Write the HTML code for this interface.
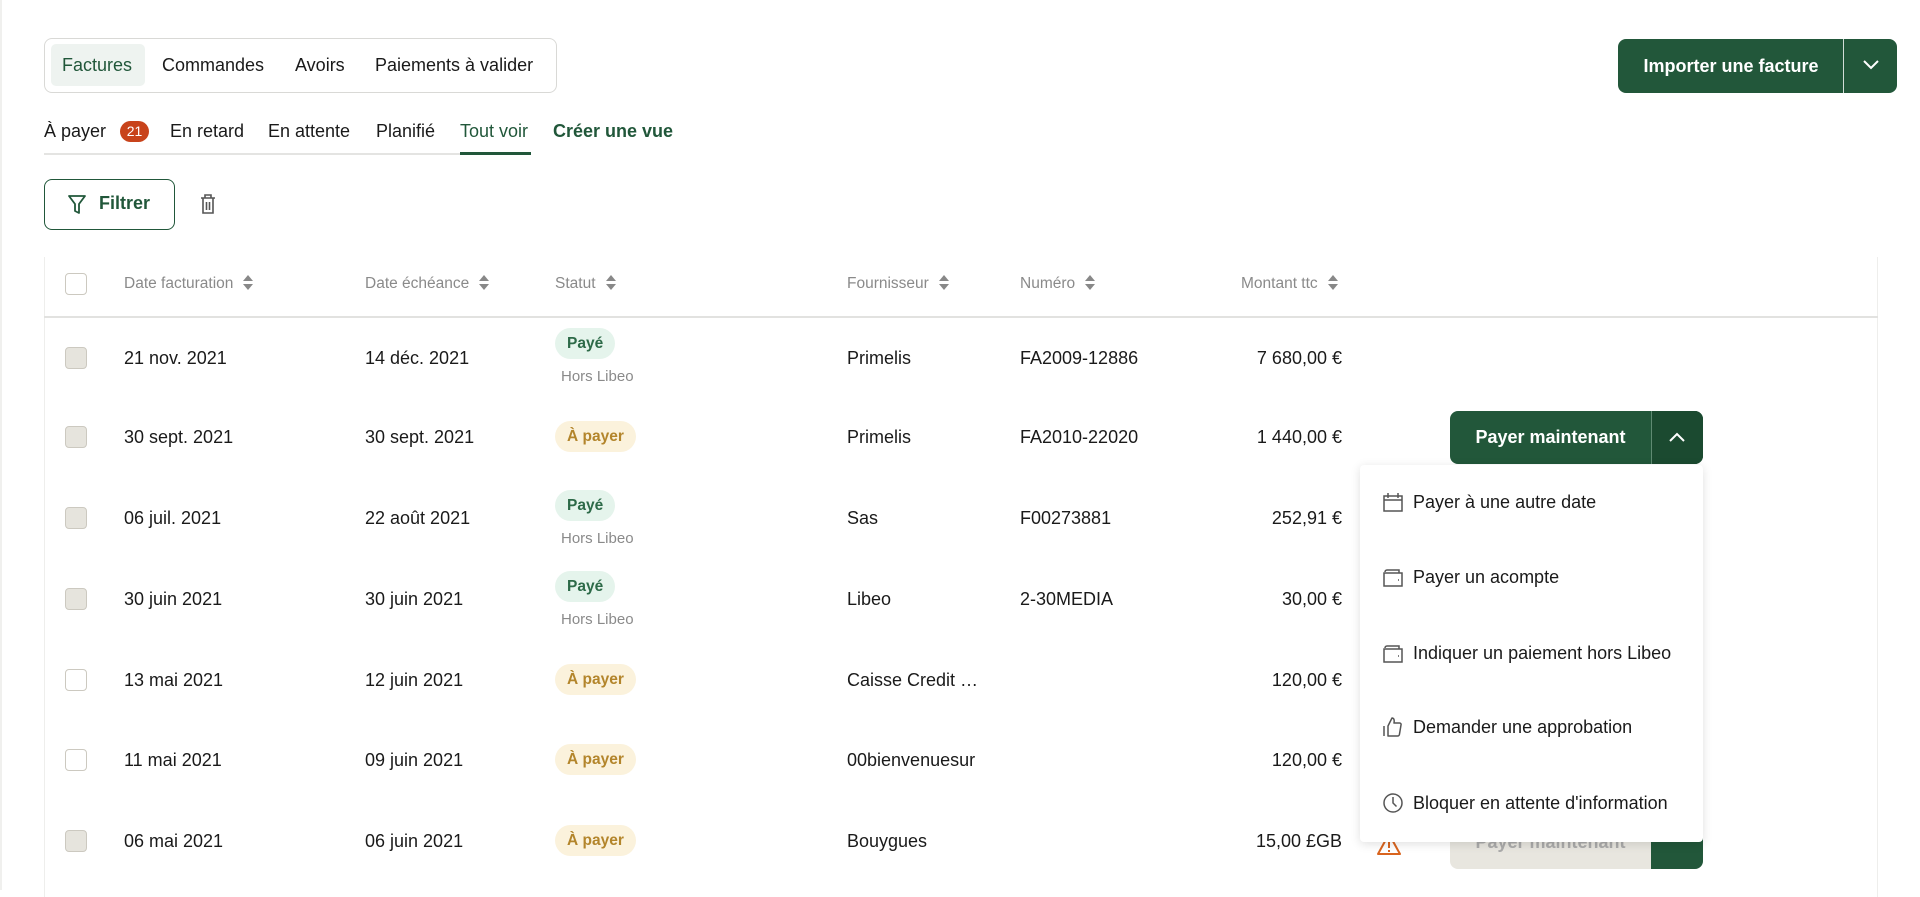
<!DOCTYPE html>
<html><head><meta charset="utf-8"><style>
*{box-sizing:border-box;margin:0;padding:0}
body{width:1920px;height:890px;overflow:hidden;background:#fff;font-family:"Liberation Sans",Arial,sans-serif;color:#1a1a1a;position:relative}
.a{position:absolute;white-space:nowrap}
.tabs{left:44px;top:38px;width:513px;height:55px;border:1px solid #d9d9d6;border-radius:8px}
.tab{top:44px;height:42px;line-height:42px;font-size:18px}
.g{color:#21573a}
.btn{background:#22573a;color:#fff;font-weight:bold;border-radius:8px}
.sub{top:119px;font-size:18px;line-height:24px}
.hd{top:275px;font-size:15.5px;color:#8a8a8a;line-height:18px}
.sort{display:inline-block;margin-left:10px;vertical-align:middle;width:10px;height:15px;position:relative;top:-1px}
.cb{width:22px;height:22px;border:1.5px solid #ccc9c0;border-radius:4px;background:#e6e4dd}
.cb.w{background:#fff}
.c{font-size:18px;line-height:22px}
.pill{font-size:15.5px;font-weight:bold;height:31px;line-height:31px;border-radius:16px;padding:0 12px}
.paye{background:#e5f4ec;color:#2d6a48}
.ap{background:#fbf2dc;color:#b3852b}
.hl{font-size:15px;color:#8a8a8a}
.menu{left:1360px;top:465px;width:343px;height:377px;background:#fff;border-radius:4px;box-shadow:0 2px 10px rgba(0,0,0,.13)}
.mi{left:22px;font-size:18px;line-height:22px}
.mi svg{position:absolute;left:0;top:0}
.mi span{position:absolute;left:31px;top:0}
</style></head><body>
<div class="a" style="left:0;top:0;width:2px;height:890px;background:#f0f0ee"></div>
<div class="a tabs"></div>
<div class="a" style="left:51px;top:44px;width:94px;height:42px;background:#eef3f0;border-radius:5px"></div>
<div class="a tab g" style="left:62px">Factures</div>
<div class="a tab" style="left:162px">Commandes</div>
<div class="a tab" style="left:295px">Avoirs</div>
<div class="a tab" style="left:375px">Paiements à valider</div>

<div class="a btn" style="left:1618px;top:39px;width:279px;height:54px"></div>
<div class="a" style="left:1618px;top:39px;width:226px;height:54px;line-height:54px;text-align:center;color:#fff;font-weight:bold;font-size:18px">Importer une facture</div>
<div class="a" style="left:1843px;top:39px;width:1px;height:54px;background:#fff;opacity:.8"></div>
<svg class="a" style="left:1862px;top:58px" width="18" height="14" viewBox="0 0 18 14"><path d="M2 3l7 7 7-7" fill="none" stroke="#fff" stroke-width="2"/></svg>

<div class="a sub" style="left:44px">À payer</div>
<div class="a" style="left:120px;top:121px;width:29px;height:21px;border-radius:11px;background:#c8431b;color:#fff;font-size:14px;line-height:21px;text-align:center">21</div>
<div class="a sub" style="left:170px">En retard</div>
<div class="a sub" style="left:268px">En attente</div>
<div class="a sub" style="left:376px">Planifié</div>
<div class="a sub g" style="left:460px">Tout voir</div>
<div class="a sub g" style="left:553px;font-weight:bold">Créer une vue</div>
<div class="a" style="left:44px;top:153px;width:487px;height:2px;background:#e4e4e2"></div>
<div class="a" style="left:460px;top:152px;width:71px;height:3px;background:#21573a"></div>

<div class="a" style="left:44px;top:179px;width:131px;height:51px;border:1.5px solid #21573a;border-radius:8px"></div>
<svg class="a" style="left:67px;top:194px" width="20" height="21" viewBox="0 0 20 21"><path d="M2 2h16l-6 8v9l-4-2v-7z" fill="none" stroke="#21573a" stroke-width="1.8" stroke-linejoin="round"/></svg>
<div class="a g" style="left:99px;top:193px;font-size:18px;font-weight:bold">Filtrer</div>
<svg class="a" style="left:199px;top:193px" width="18" height="22" viewBox="0 0 18 22"><path d="M2 5h14M6 5V2h6v3M4 5v15h10V5M7.5 9v8M10.5 9v8" fill="none" stroke="#555" stroke-width="1.6"/></svg>

<div class="a" style="left:44px;top:257px;width:1834px;height:640px;border-left:1px solid #eeeeec;border-right:1px solid #eeeeec"></div>
<div class="a" style="left:44px;top:316px;width:1834px;height:2px;background:#e2e2e0"></div>
<div class="a cb w" style="left:65px;top:273px"></div>
<div class="a hd" style="left:124px">Date facturation<svg class="sort" viewBox="0 0 10 15"><path d="M5 0L10 6H0zM5 15L0 9h10z" fill="#888"/></svg></div>
<div class="a hd" style="left:365px">Date échéance<svg class="sort" viewBox="0 0 10 15"><path d="M5 0L10 6H0zM5 15L0 9h10z" fill="#888"/></svg></div>
<div class="a hd" style="left:555px">Statut<svg class="sort" viewBox="0 0 10 15"><path d="M5 0L10 6H0zM5 15L0 9h10z" fill="#888"/></svg></div>
<div class="a hd" style="left:847px">Fournisseur<svg class="sort" viewBox="0 0 10 15"><path d="M5 0L10 6H0zM5 15L0 9h10z" fill="#888"/></svg></div>
<div class="a hd" style="left:1020px">Numéro<svg class="sort" viewBox="0 0 10 15"><path d="M5 0L10 6H0zM5 15L0 9h10z" fill="#888"/></svg></div>
<div class="a hd" style="left:1241px">Montant ttc<svg class="sort" viewBox="0 0 10 15"><path d="M5 0L10 6H0zM5 15L0 9h10z" fill="#888"/></svg></div>

<div class="a cb" style="left:65px;top:347px"></div>
<div class="a c" style="left:124px;top:347px">21 nov. 2021</div>
<div class="a c" style="left:365px;top:347px">14 déc. 2021</div>
<div class="a pill paye" style="left:555px;top:328px">Payé</div>
<div class="a hl" style="left:561px;top:368px">Hors Libeo</div>
<div class="a c" style="left:847px;top:347px">Primelis</div>
<div class="a c" style="left:1020px;top:347px">FA2009-12886</div>
<div class="a c" style="right:578px;top:347px">7 680,00 €</div>

<div class="a cb" style="left:65px;top:426px"></div>
<div class="a c" style="left:124px;top:426px">30 sept. 2021</div>
<div class="a c" style="left:365px;top:426px">30 sept. 2021</div>
<div class="a pill ap" style="left:555px;top:421px">À payer</div>
<div class="a c" style="left:847px;top:426px">Primelis</div>
<div class="a c" style="left:1020px;top:426px">FA2010-22020</div>
<div class="a c" style="right:578px;top:426px">1 440,00 €</div>
<div class="a btn" style="left:1450px;top:411px;width:253px;height:53px"></div>
<div class="a" style="left:1450px;top:411px;width:201px;height:53px;line-height:53px;text-align:center;color:#fff;font-weight:bold;font-size:18px">Payer maintenant</div>
<div class="a" style="left:1651px;top:411px;width:52px;height:53px;background:#1b4a30;border-radius:0 8px 8px 0;border-left:1px solid #5f8a72"></div>
<svg class="a" style="left:1668px;top:430px" width="18" height="14" viewBox="0 0 18 14"><path d="M2 11l7-7 7 7" fill="none" stroke="#fff" stroke-width="2"/></svg>

<div class="a cb" style="left:65px;top:507px"></div>
<div class="a c" style="left:124px;top:507px">06 juil. 2021</div>
<div class="a c" style="left:365px;top:507px">22 août 2021</div>
<div class="a pill paye" style="left:555px;top:490px">Payé</div>
<div class="a hl" style="left:561px;top:530px">Hors Libeo</div>
<div class="a c" style="left:847px;top:507px">Sas</div>
<div class="a c" style="left:1020px;top:507px">F00273881</div>
<div class="a c" style="right:578px;top:507px">252,91 €</div>

<div class="a cb" style="left:65px;top:588px"></div>
<div class="a c" style="left:124px;top:588px">30 juin 2021</div>
<div class="a c" style="left:365px;top:588px">30 juin 2021</div>
<div class="a pill paye" style="left:555px;top:571px">Payé</div>
<div class="a hl" style="left:561px;top:611px">Hors Libeo</div>
<div class="a c" style="left:847px;top:588px">Libeo</div>
<div class="a c" style="left:1020px;top:588px">2-30MEDIA</div>
<div class="a c" style="right:578px;top:588px">30,00 €</div>

<div class="a cb w" style="left:65px;top:669px"></div>
<div class="a c" style="left:124px;top:669px">13 mai 2021</div>
<div class="a c" style="left:365px;top:669px">12 juin 2021</div>
<div class="a pill ap" style="left:555px;top:664px">À payer</div>
<div class="a c" style="left:847px;top:669px">Caisse Credit …</div>
<div class="a c" style="right:578px;top:669px">120,00 €</div>

<div class="a cb w" style="left:65px;top:749px"></div>
<div class="a c" style="left:124px;top:749px">11 mai 2021</div>
<div class="a c" style="left:365px;top:749px">09 juin 2021</div>
<div class="a pill ap" style="left:555px;top:744px">À payer</div>
<div class="a c" style="left:847px;top:749px">00bienvenuesur</div>
<div class="a c" style="right:578px;top:749px">120,00 €</div>

<div class="a cb" style="left:65px;top:830px"></div>
<div class="a c" style="left:124px;top:830px">06 mai 2021</div>
<div class="a c" style="left:365px;top:830px">06 juin 2021</div>
<div class="a pill ap" style="left:555px;top:825px">À payer</div>
<div class="a c" style="left:847px;top:830px">Bouygues</div>
<div class="a c" style="right:578px;top:830px">15,00 £GB</div>
<svg class="a" style="left:1376px;top:832px" width="26" height="24" viewBox="0 0 26 24"><path d="M13 2L24 22H2z" fill="none" stroke="#d9641e" stroke-width="2" stroke-linejoin="round"/><path d="M13 9v7M13 18v2" stroke="#d9641e" stroke-width="2"/></svg>
<div class="a" style="left:1450px;top:816px;width:253px;height:53px;background:#e8e6df;border-radius:8px"></div>
<div class="a" style="left:1450px;top:816px;width:201px;height:53px;line-height:53px;text-align:center;color:#aaa;font-weight:bold;font-size:18px">Payer maintenant</div>
<div class="a" style="left:1651px;top:816px;width:52px;height:53px;background:#22573a;border-radius:0 8px 8px 0"></div>

<div class="a menu">
 <div class="a mi" style="top:26px"><svg width="22" height="22" viewBox="0 0 22 22"><path d="M2 5h18v15H2zM2 9h18M6 2v5M16 2v5" fill="none" stroke="#555" stroke-width="1.5"/></svg><span>Payer à une autre date</span></div>
 <div class="a mi" style="top:101px"><svg width="22" height="22" viewBox="0 0 22 22"><path d="M3 6a2 2 0 012-2h12v3M2 7h18v13H2zM16 14h1" fill="none" stroke="#555" stroke-width="1.5"/></svg><span>Payer un acompte</span></div>
 <div class="a mi" style="top:177px"><svg width="22" height="22" viewBox="0 0 22 22"><path d="M3 6a2 2 0 012-2h12v3M2 7h18v13H2zM16 14h1" fill="none" stroke="#555" stroke-width="1.5"/></svg><span>Indiquer un paiement hors Libeo</span></div>
 <div class="a mi" style="top:251px"><svg width="22" height="22" viewBox="0 0 22 22"><path d="M2 10v10M6 10l4-8c2 0 2.5 2 2 5h5.5a1.5 1.5 0 011.5 2l-1.5 9a2 2 0 01-2 2H6z" fill="none" stroke="#555" stroke-width="1.5" stroke-linejoin="round"/></svg><span>Demander une approbation</span></div>
 <div class="a mi" style="top:327px"><svg width="22" height="22" viewBox="0 0 22 22"><circle cx="11" cy="11" r="9" fill="none" stroke="#555" stroke-width="1.5"/><path d="M11 5v6l3.5 3.5" fill="none" stroke="#555" stroke-width="1.5"/></svg><span>Bloquer en attente d'information</span></div>
</div>
</body></html>
